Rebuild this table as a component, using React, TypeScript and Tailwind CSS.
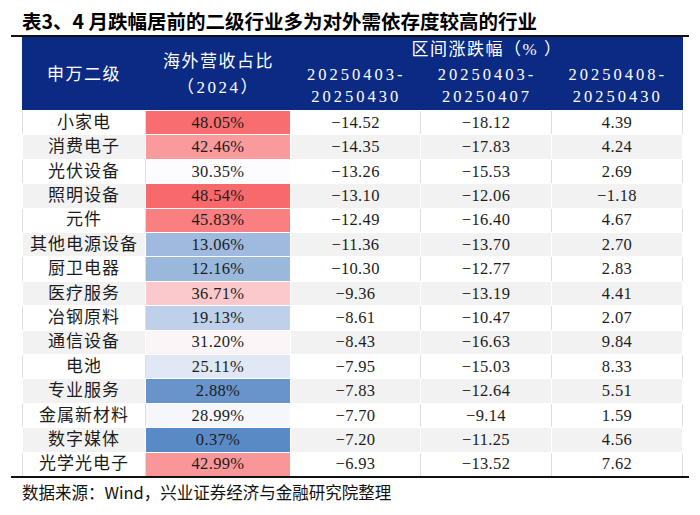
import React from 'react';

type Row = {
  name: string;
  share: string;
  shareBg: string;
  a: string;
  b: string;
  c: string;
};

// 海外营收占比 uses a 3-colour scale (blue → white → red), precomputed per row
const rows: Row[] = [
  { name: '小家电', share: '48.05%', shareBg: 'bg-[#f86d6f]', a: '−14.52', b: '−18.12', c: '4.39' },
  { name: '消费电子', share: '42.46%', shareBg: 'bg-[#f99a9d]', a: '−14.35', b: '−17.83', c: '4.24' },
  { name: '光伏设备', share: '30.35%', shareBg: 'bg-[#fcfcff]', a: '−13.26', b: '−15.53', c: '2.69' },
  { name: '照明设备', share: '48.54%', shareBg: 'bg-[#f8696b]', a: '−13.10', b: '−12.06', c: '−1.18' },
  { name: '元件', share: '45.83%', shareBg: 'bg-[#f97f81]', a: '−12.49', b: '−16.40', c: '4.67' },
  { name: '其他电源设备', share: '13.06%', shareBg: 'bg-[#9fbade]', a: '−11.36', b: '−13.70', c: '2.70' },
  { name: '厨卫电器', share: '12.16%', shareBg: 'bg-[#9ab7dc]', a: '−10.30', b: '−12.77', c: '2.83' },
  { name: '医疗服务', share: '36.71%', shareBg: 'bg-[#fbc9cb]', a: '−9.36', b: '−13.19', c: '4.41' },
  { name: '冶钢原料', share: '19.13%', shareBg: 'bg-[#bfd1ea]', a: '−8.61', b: '−10.47', c: '2.07' },
  { name: '通信设备', share: '31.20%', shareBg: 'bg-[#fcf5f8]', a: '−8.43', b: '−16.63', c: '9.84' },
  { name: '电池', share: '25.11%', shareBg: 'bg-[#e0e8f5]', a: '−7.95', b: '−15.03', c: '8.33' },
  { name: '专业服务', share: '2.88%', shareBg: 'bg-[#6894cb]', a: '−7.83', b: '−12.64', c: '5.51' },
  { name: '金属新材料', share: '28.99%', shareBg: 'bg-[#f5f7fc]', a: '−7.70', b: '−9.14', c: '1.59' },
  { name: '数字媒体', share: '0.37%', shareBg: 'bg-[#5a8ac6]', a: '−7.20', b: '−11.25', c: '4.56' },
  { name: '光学光电子', share: '42.99%', shareBg: 'bg-[#f99698]', a: '−6.93', b: '−13.52', c: '7.62' },
];

const tableFont = "font-['Liberation_Serif','Noto_Sans_CJK_SC',serif]";

function HeaderDate({ top, bottom }: { top: string; bottom: string }) {
  return (
    <div className="flex-1 flex flex-col items-center pt-[1px] text-[16.5px] leading-[22px] tracking-[3px]">
      <span>{top}</span>
      <span>{bottom}</span>
    </div>
  );
}

function DataRow({ row, index }: { row: Row; index: number }) {
  const striped = index % 2 === 1;
  const line = striped ? 'border-white' : 'border-[#dedede]';
  const num = 'flex items-center justify-center text-[16.5px] tracking-[0.35px] border-r';
  return (
    <div
      className={`flex-1 min-h-0 flex border-t border-white leading-[20px] text-[#1c1c1c] ${striped ? 'bg-[#f2f2f2]' : 'bg-white'}`}
    >
      <div className={`w-[124px] flex items-center justify-center text-[17px] tracking-[1px] border-l border-r ${line}`}>
        {row.name}
      </div>
      <div className={`w-[145px] ${num} border-white ${row.shareBg}`}>{row.share}</div>
      <div className={`w-[130px] ${num} ${line}`}>{row.a}</div>
      <div className={`w-[131px] ${num} ${line}`}>{row.b}</div>
      <div className={`w-[131px] ${num} ${line}`}>{row.c}</div>
    </div>
  );
}

export default function App() {
  return (
    <div className="w-[700px] h-[515px] bg-white">
      <h1 className="pl-[22px] pt-[7px] h-[35px] text-[19.5px] leading-[28px] font-bold text-black font-['Noto_Sans_CJK_SC',sans-serif]">
        表3、4 月跌幅居前的二级行业多为对外需依存度较高的行业
      </h1>
      <div className="mx-[11px] border-t-2 border-[#111]" />

      <div className={`ml-[22px] w-[661px] ${tableFont}`}>
        <div className="h-[73px] flex bg-[#0b2a84] text-white">
          <div className="w-[124px] flex items-center justify-center pt-[3px] text-[17px] tracking-[1.5px]">
            申万二级
          </div>
          <div className="w-[145px] flex flex-col items-center justify-center pt-[3px] leading-[26px]">
            <span className="text-[17px] tracking-[1.5px]">海外营收占比</span>
            <span className="text-[17px] tracking-[2.5px]">（2024）</span>
          </div>
          <div className="flex-1 flex flex-col">
            <div className="h-[26px] flex items-center justify-center text-[17px] tracking-[1.5px]">
              区间涨跌幅（% ）
            </div>
            <div className="flex-1 flex">
              <HeaderDate top="20250403-" bottom="20250430" />
              <HeaderDate top="20250403-" bottom="20250407" />
              <HeaderDate top="20250408-" bottom="20250430" />
            </div>
          </div>
        </div>

        <div className="h-[366px] flex flex-col">
          {rows.map((row, i) => (
            <DataRow key={row.name} row={row} index={i} />
          ))}
        </div>
      </div>

      <div className="mx-[11px] border-t-2 border-[#111]" />
      <p className="pl-[22px] pt-[2px] text-[16.5px] leading-[24px] text-[#111] font-['Noto_Sans_CJK_SC',sans-serif]">
        数据来源：Wind，兴业证券经济与金融研究院整理
      </p>
    </div>
  );
}
